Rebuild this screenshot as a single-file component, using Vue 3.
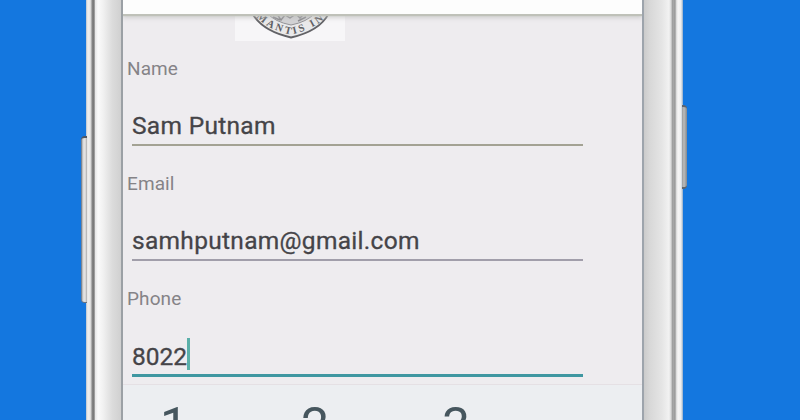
<script setup>
const fields = [
  { label: 'Name', value: 'Sam Putnam', kind: 'name' },
  { label: 'Email', value: 'samhputnam@gmail.com', kind: 'email' },
  { label: 'Phone', value: '8022', kind: 'tel', focused: true },
]
const keys = ['1', '2', '3']
</script>

<template>
  <div class="stage">
    <div class="phone">
      <div class="volume"></div>
      <div class="power"></div>
      <div class="rim rim-left"></div>
      <div class="bezel bezel-left"></div>
      <main class="screen">
        <header class="toolbar"></header>
        <div class="crest">
          <svg width="110" height="27" viewBox="235 14 110 27" aria-hidden="true">
            <defs><path id="motto" d="M254 15 Q268 30 291 34.5 Q314 30 331 13" /></defs>
            <path d="M252 13 Q262 31 291 37.5 Q320 31 329 13Z" fill="#e9e9ea" stroke="#626266" stroke-width="1.8" />
            <path d="M267 13 Q275 22 291 25 Q307 22 315 13" fill="#d2d2d4" stroke="#929296" />
            <path d="M277 14l4 6 4-5 5 3 6-4 4 4 4-4M273 17l7 3M298 21l8-4" fill="none" stroke="#8a8a8e" stroke-width="1.4" />
            <text><textPath href="#motto" startOffset="3" textLength="76">MANTIS IN</textPath></text>
          </svg>
        </div>
        <section v-for="f in fields" :key="f.kind" class="field" :class="[f.kind, { focused: f.focused }]">
          <label>{{ f.label }}</label>
          <div class="input"><span>{{ f.value }}</span><i v-if="f.focused" class="caret"></i></div>
        </section>
        <div class="keypad">
          <span v-for="k in keys" :key="k">{{ k }}</span>
        </div>
      </main>
      <div class="bezel bezel-right"></div>
      <div class="rim rim-right"></div>
    </div>
  </div>
</template>

<style>
body { margin: 0; }
</style>

<style scoped>
.stage {
  width: 800px; height: 420px; overflow: hidden; background: #1477df;
  font-family: Roboto, "Liberation Sans", sans-serif;
}
.phone {
  position: relative; display: grid; box-sizing: border-box;
  grid-template-columns: 9px 26px 523px 29px 10px;
  width: 597px; height: 420px; margin-left: 86px;
}
.rim-left { background: linear-gradient(90deg, #a9b9ca 0, #e4e4e4 1px, #f0f0ef 3px, #d4d4d4 5px, #858585 6px, #777 8px, #c4c4c4 9px); }
.rim-right { background: linear-gradient(90deg, #aaa 0, #999 2px, #ddd 3.5px, #f7f6f6 5px, #eee 8px, #8fa9c6 10px); }
.bezel-left { background: linear-gradient(90deg, #e5e5e5, #fafafa 3px, #f1f1f1 8px, #dcdcdc 17px, #d0d0d0 26px); }
.bezel-right { background: linear-gradient(90deg, #cbcbcb, #d8d8d8 6px, #e5e5e5 18px, #f2f2f2 25px, #d8d8d8 27px, #8c8c8c 29px); }
.volume, .power { position: absolute; box-sizing: border-box; }
.volume {
  left: -5px; top: 136px; width: 6px; height: 167px; border-radius: 4px 0 0 4px;
  background: linear-gradient(90deg, #59697b, #d7d7d7 2px, #e6e6e6 4px, #aaa);
  border-top: 2px solid #505863; border-bottom: 1px solid #6a7482;
}
.power {
  right: -4px; top: 105px; width: 5px; height: 84px; border-radius: 0 4px 4px 0;
  background: linear-gradient(90deg, #9b9b9b, #bcbcbc 2px, #85898e);
  border-top: 2px solid #60656b; border-bottom: 2px solid #60656b;
}
.screen {
  display: grid; box-sizing: border-box; height: 420px; overflow: hidden;
  grid-template-rows: 14px 27px 115px 115px 113px 36px;
  background: #eeecef;
  border-left: 2px solid #9ba0a5; border-right: 2px solid #9da4ac;
}
.toolbar { background: #fdfdfd; box-shadow: 0 2px 1px #bfc1b9, 0 4px 4px #bbb9; z-index: 1; }
.crest { padding-left: 112px; height: 27px; }
.crest svg { display: block; background: #f7f6f8; }
.crest text { font: bold 10.5px "Liberation Serif", serif; fill: #606064; }
.field { padding-left: 4px; }
.field label {
  display: block; height: 36px; padding-top: 17px; box-sizing: border-box;
  line-height: 22px; font-size: 19px; letter-spacing: 0.1px; color: #858387;
}
.input {
  display: flex; align-items: center; box-sizing: border-box;
  width: 451px; height: 44px; margin-top: 25px; margin-left: 5px; padding-top: 5px;
  border-bottom: 2px solid #a3a293;
  font-size: 24.5px; letter-spacing: 0.3px; color: #454448; -webkit-text-stroke: 0.3px #454448;
}
.email .input { border-bottom-color: #a19eaa; }
.focused .input { border-bottom: 3px solid #3f97a1; height: 45px; padding-top: 6px; letter-spacing: 0; }
.caret { width: 3px; height: 32px; margin-top: -4px; background: #5aafa9; }
.keypad {
  display: grid; grid-template-columns: 141px 141px 141px; align-items: start;
  box-sizing: border-box; height: 36px;
  background: #eceef1; border-top: 1px solid #e5e0e4; padding-top: 12px;
  font-size: 50px; line-height: 59px; color: #46565e; text-align: center;
}
.keypad span { margin-left: -39px; }
</style>
